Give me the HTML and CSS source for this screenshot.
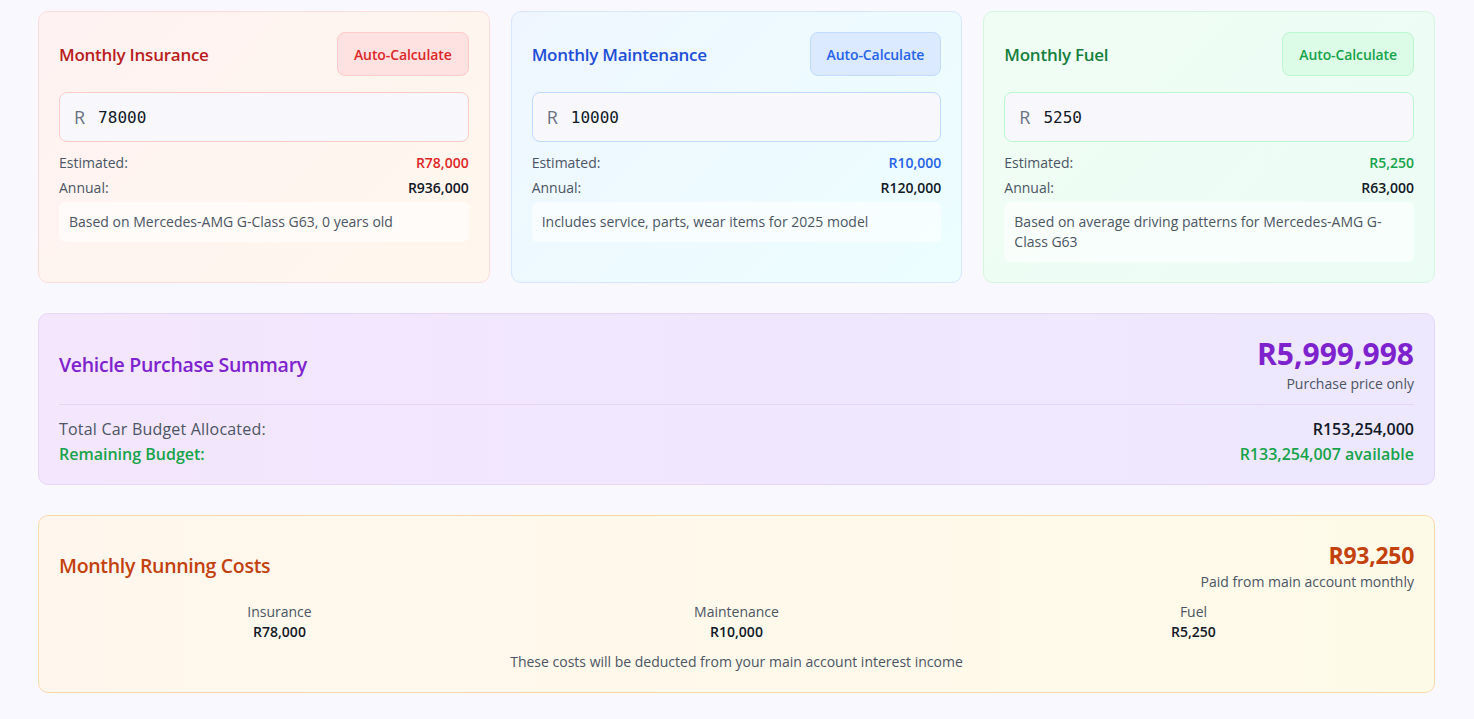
FILE: index.html
```html
<!DOCTYPE html>
<html lang="en">
<head>
<meta charset="utf-8">
<title>Vehicle Costs</title>
<link rel="stylesheet" href="styles.css">
</head>
<body>
<main class="page">
  <section class="cost-grid">
    <div class="cost-card card-red">
      <div class="card-head">
        <h3 class="card-title">Monthly Insurance</h3>
        <button class="auto-btn">Auto-Calculate</button>
      </div>
      <div class="amount-input">
        <span class="prefix">R</span>
        <span class="value">78000</span>
      </div>
      <div class="stat-row"><span class="stat-label">Estimated:</span><span class="stat-accent">R78,000</span></div>
      <div class="stat-row"><span class="stat-label">Annual:</span><span class="stat-strong">R936,000</span></div>
      <p class="note">Based on Mercedes-AMG G-Class G63, 0 years old</p>
    </div>

    <div class="cost-card card-blue">
      <div class="card-head">
        <h3 class="card-title">Monthly Maintenance</h3>
        <button class="auto-btn">Auto-Calculate</button>
      </div>
      <div class="amount-input">
        <span class="prefix">R</span>
        <span class="value">10000</span>
      </div>
      <div class="stat-row"><span class="stat-label">Estimated:</span><span class="stat-accent">R10,000</span></div>
      <div class="stat-row"><span class="stat-label">Annual:</span><span class="stat-strong">R120,000</span></div>
      <p class="note">Includes service, parts, wear items for 2025 model</p>
    </div>

    <div class="cost-card card-green">
      <div class="card-head">
        <h3 class="card-title">Monthly Fuel</h3>
        <button class="auto-btn">Auto-Calculate</button>
      </div>
      <div class="amount-input">
        <span class="prefix">R</span>
        <span class="value">5250</span>
      </div>
      <div class="stat-row"><span class="stat-label">Estimated:</span><span class="stat-accent">R5,250</span></div>
      <div class="stat-row"><span class="stat-label">Annual:</span><span class="stat-strong">R63,000</span></div>
      <p class="note">Based on average driving patterns for Mercedes-AMG G-Class G63</p>
    </div>
  </section>

  <section class="summary-card">
    <div class="summary-head">
      <h3 class="summary-title">Vehicle Purchase Summary</h3>
      <div class="summary-right">
        <div class="summary-amount">R5,999,998</div>
        <div class="summary-sub">Purchase price only</div>
      </div>
    </div>
    <div class="summary-rows">
      <div class="summary-row"><span class="row-label">Total Car Budget Allocated:</span><span class="row-value">R153,254,000</span></div>
      <div class="summary-row remaining"><span>Remaining Budget:</span><span>R133,254,007 available</span></div>
    </div>
  </section>

  <section class="running-card">
    <div class="running-head">
      <h3 class="running-title">Monthly Running Costs</h3>
      <div class="running-right">
        <div class="running-amount">R93,250</div>
        <div class="running-sub">Paid from main account monthly</div>
      </div>
    </div>
    <div class="running-grid">
      <div class="running-item"><div class="item-label">Insurance</div><div class="item-value">R78,000</div></div>
      <div class="running-item"><div class="item-label">Maintenance</div><div class="item-value">R10,000</div></div>
      <div class="running-item"><div class="item-label">Fuel</div><div class="item-value">R5,250</div></div>
    </div>
    <p class="running-note">These costs will be deducted from your main account interest income</p>
  </section>
</main>
</body>
</html>
```

FILE: styles.css
```css
* { box-sizing: border-box; }

body {
  margin: 0;
  background: #f9f8fe;
  font-family: "Open Sans", "Noto Sans", sans-serif;
  color: #111827;
}

.page {
  padding: 11px 39px 20px 38px;
}

h3, p { margin: 0; }

.cost-grid {
  display: grid;
  grid-template-columns: repeat(3, 1fr);
  gap: 21px;
}

.cost-card {
  border: 1px solid;
  border-radius: 10px;
  padding: 20px;
}

.card-red { background: linear-gradient(135deg, #fef2f2, #fff7ed); border-color: #fddcdc; }
.card-blue { background: linear-gradient(135deg, #eff6ff, #ecfeff); border-color: #d5e6fd; }
.card-green { background: linear-gradient(135deg, #f0fdf4, #ecfdf5); border-color: #d3f7de; }

.card-head {
  display: flex;
  justify-content: space-between;
  align-items: center;
  margin-bottom: 16px;
}

.card-title {
  font-size: 17px;
  line-height: 28px;
  font-weight: 600;
  letter-spacing: -0.25px;
  padding-top: 2px;
}

.card-red .card-title { color: #b91c1c; }
.card-blue .card-title { color: #1d4ed8; }
.card-green .card-title { color: #15803d; }

.auto-btn {
  height: 44px;
  padding: 0 16px;
  border-radius: 8px;
  border: 1px solid;
  font-family: inherit;
  font-size: 14px;
  font-weight: 600;
  letter-spacing: -0.1px;
}

.card-red .auto-btn { background: #fee2e2; border-color: #fecaca; color: #dc2626; }
.card-blue .auto-btn { background: #dbeafe; border-color: #bfdbfe; color: #2563eb; }
.card-green .auto-btn { background: #dcfce7; border-color: #bbf7d0; color: #16a34a; }

.amount-input {
  display: flex;
  align-items: center;
  gap: 13px;
  height: 50px;
  padding: 0 14px;
  background: #f8f8fc;
  border: 1px solid;
  border-radius: 8px;
  margin-bottom: 11px;
}

.card-red .amount-input { border-color: #fecaca; }
.card-blue .amount-input { border-color: #bfdbfe; }
.card-green .amount-input { border-color: #bbf7d0; }

.prefix {
  font-size: 18px;
  color: #6b7280;
}

.value {
  font-family: "DejaVu Sans Mono", "Liberation Mono", monospace;
  font-size: 16px;
  color: #111827;
}

.stat-row {
  display: flex;
  justify-content: space-between;
  font-size: 14px;
  line-height: 20px;
  margin-bottom: 5px;
}

.stat-row + .stat-row { margin-bottom: 4px; }

.stat-label { color: #4b5563; }
.stat-strong { font-weight: 600; color: #111827; }
.stat-accent { font-weight: 600; }
.card-red .stat-accent { color: #dc2626; }
.card-blue .stat-accent { color: #2563eb; }
.card-green .stat-accent { color: #16a34a; }

.note {
  background: rgba(255, 255, 255, 0.6);
  border-radius: 6px;
  padding: 10px;
  font-size: 14px;
  line-height: 20px;
  color: #4b5563;
}

.summary-card {
  margin-top: 30px;
  background: linear-gradient(90deg, #f3e6fd, #ede8fe);
  border: 1px solid #e6d6fb;
  border-radius: 10px;
  padding: 21px 20px 17px;
}

.summary-head {
  display: flex;
  justify-content: space-between;
  align-items: center;
  padding-bottom: 10px;
  border-bottom: 1px solid #e5d4fc;
  margin-bottom: 12px;
}

.summary-title {
  font-size: 19.5px;
  font-weight: 600;
  color: #7e22ce;
  letter-spacing: -0.3px;
}

.summary-right { text-align: right; }

.summary-amount {
  font-size: 30px;
  line-height: 38px;
  font-weight: 700;
  color: #7e22ce;
}

.summary-sub {
  margin-top: 1px;
  font-size: 14px;
  line-height: 20px;
  color: #4b5563;
}

.summary-row {
  display: flex;
  justify-content: space-between;
  font-size: 16px;
  line-height: 25px;
}

.row-label { color: #4b5563; letter-spacing: 0.2px; }
.row-value { font-weight: 600; color: #111827; }
.remaining { color: #16a34a; font-weight: 600; }

.running-card {
  margin-top: 30px;
  background: linear-gradient(90deg, #fff7ed, #fefae8);
  border: 1px solid #fdd9ac;
  border-radius: 10px;
  padding: 22px 20px 20px;
}

.running-head {
  display: flex;
  justify-content: space-between;
  align-items: center;
  margin-bottom: 10px;
}

.running-title {
  font-size: 19.5px;
  font-weight: 600;
  color: #c2410c;
  letter-spacing: -0.3px;
}

.running-right { text-align: right; }

.running-amount {
  font-size: 23px;
  line-height: 34px;
  font-weight: 700;
  color: #c2410c;
  letter-spacing: -0.3px;
}

.running-sub {
  font-size: 14px;
  line-height: 20px;
  color: #4b5563;
}

.running-grid {
  display: grid;
  grid-template-columns: repeat(3, 1fr);
  gap: 16px;
  text-align: center;
}

.item-label {
  font-size: 14px;
  line-height: 20px;
  color: #4b5563;
}

.item-value {
  font-size: 14px;
  line-height: 20px;
  font-weight: 600;
  color: #111827;
}

.running-note {
  margin-top: 10px;
  text-align: center;
  font-size: 14px;
  line-height: 20px;
  color: #4b5563;
}
```
